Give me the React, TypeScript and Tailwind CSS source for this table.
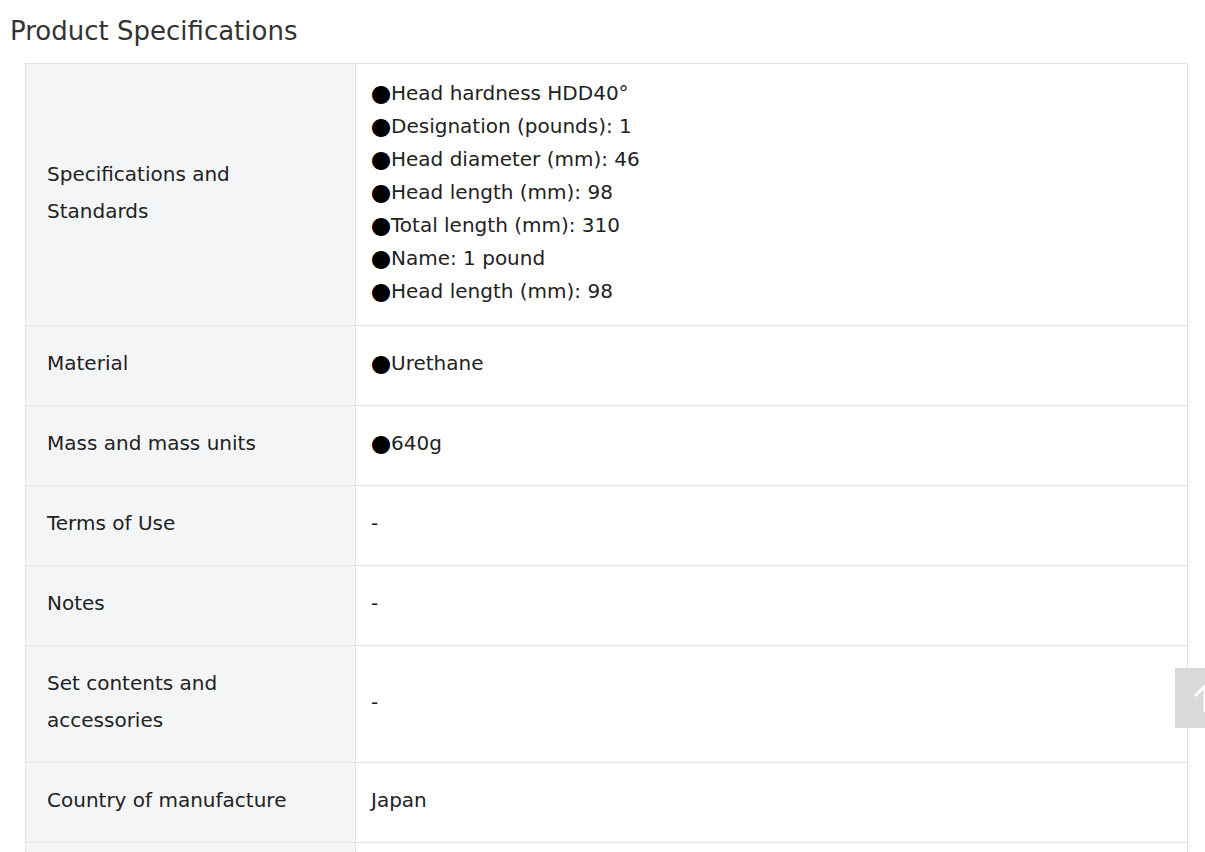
import React from 'react';

const specLines = [
  'Head hardness HDD40°',
  'Designation (pounds): 1',
  'Head diameter (mm): 46',
  'Head length (mm): 98',
  'Total length (mm): 310',
  'Name: 1 pound',
  'Head length (mm): 98',
];

type Row = { label: string; value: string[] | string; bullet?: boolean };

const rows: Row[] = [
  { label: 'Specifications and Standards', value: specLines, bullet: true },
  { label: 'Material', value: ['Urethane'], bullet: true },
  { label: 'Mass and mass units', value: ['640g'], bullet: true },
  { label: 'Terms of Use', value: '-' },
  { label: 'Notes', value: '-' },
  { label: 'Set contents and accessories', value: '-' },
  { label: 'Country of manufacture', value: 'Japan' },
  { label: 'JAN code', value: '-' },
];

const Bullet = () => (
  <span
    className="relative top-[3px] text-black leading-[0px]"
    style={{ fontFamily: '"Noto Sans CJK JP", sans-serif' }}
  >
    ●
  </span>
);

export default function App() {
  return (
    <div
      className="relative h-[852px] overflow-hidden bg-white text-[#222]"
      style={{ fontFamily: '"DejaVu Sans", "Noto Sans CJK JP", sans-serif' }}
    >
      <h2 className="pl-[10px] pt-[12px] text-[26px] leading-[38px] text-[#333]">Product Specifications</h2>

      <table className="mt-[13px] ml-[25px] w-[1163px] border-collapse">
        <tbody>
          {rows.map((row, i) => (
            <tr key={i}>
              <th className="w-[330px] border border-[#e3e3e3] bg-[#f4f5f7] px-[21px] pt-[19px] pb-[23px] text-left align-middle text-[20px] font-normal leading-[37px]">
                <div className="max-w-[270px]">{row.label}</div>
              </th>
              <td className="border border-[#e3e3e3] px-[15px] pt-[13px] pb-[17px] align-middle text-[20px] leading-[33px]">
                {Array.isArray(row.value) ? (
                  row.value.map((line, j) => (
                    <div key={j}>
                      {row.bullet && <Bullet />}
                      {line}
                    </div>
                  ))
                ) : (
                  <div>{row.value}</div>
                )}
              </td>
            </tr>
          ))}
        </tbody>
      </table>

      {/* scroll to top */}
      <div className="absolute left-[1175px] top-[668px] flex h-[60px] w-[60px] items-center justify-center bg-[#d9d9d9]">
        <svg width="26" height="32" viewBox="0 0 26 32" fill="none" stroke="white" strokeWidth="3">
          <path d="M13 30V4" />
          <path d="M3 14L13 4L23 14" />
        </svg>
      </div>
    </div>
  );
}
